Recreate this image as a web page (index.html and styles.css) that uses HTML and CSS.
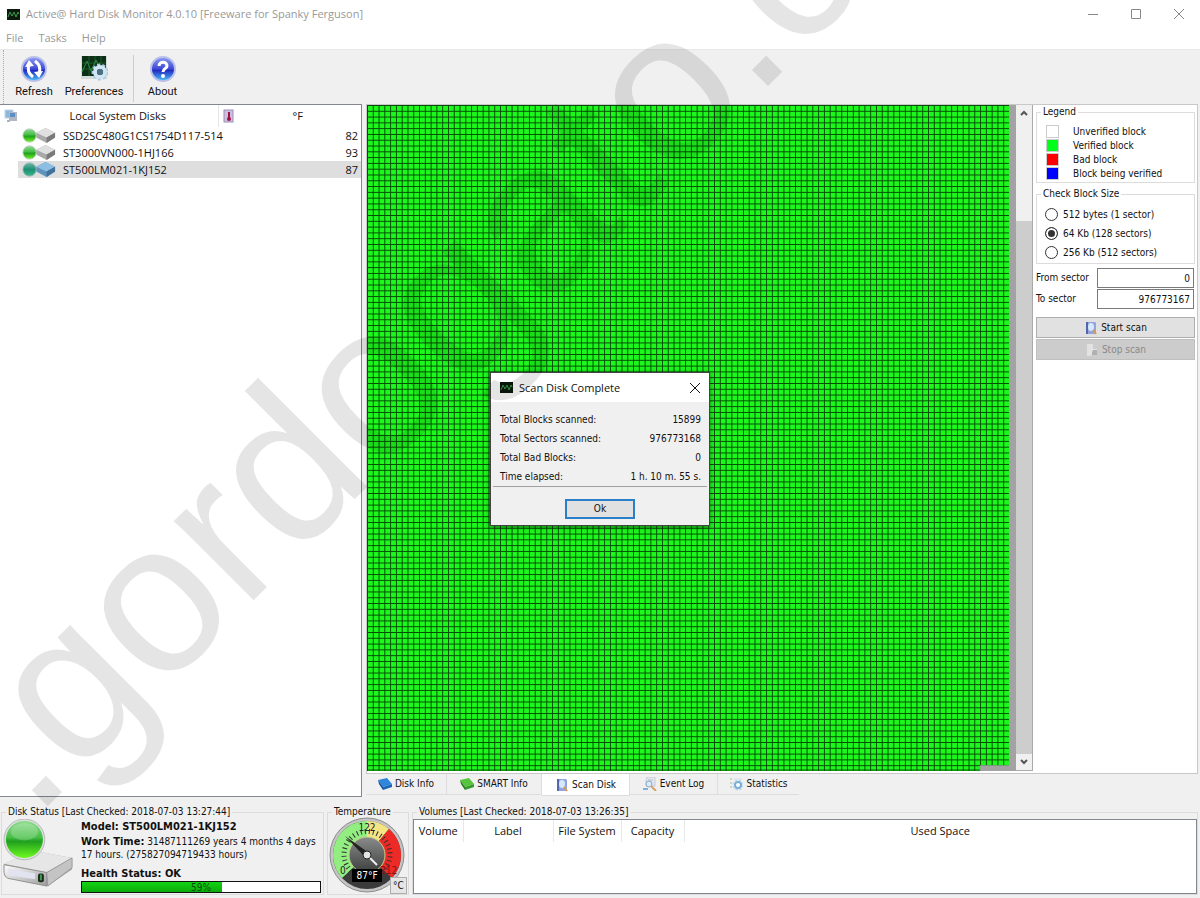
FILE: index.html
```html
<!DOCTYPE html>
<html lang="en">
<head>
    <meta charset="UTF-8">
    <meta name="viewport" content="width=device-width, initial-scale=1.0">
    <title>Active@ Hard Disk Monitor</title>
    <link rel="stylesheet" href="styles.css">
</head>
<body>
    <!-- shared icons -->
    <svg class="defs" width="0" height="0" aria-hidden="true">
        <defs>
            <linearGradient id="blueBall" x1="0" y1="0" x2="0" y2="1">
                <stop offset="0" stop-color="#8f9cf2"/>
                <stop offset="0.5" stop-color="#3f4ad4"/>
                <stop offset="0.55" stop-color="#2228c0"/>
                <stop offset="1" stop-color="#4ac4ff"/>
            </linearGradient>
            <linearGradient id="greenBall" x1="0" y1="0" x2="0" y2="1">
                <stop offset="0" stop-color="#8fdc8f"/>
                <stop offset="0.45" stop-color="#45be45"/>
                <stop offset="0.55" stop-color="#1f9f1f"/>
                <stop offset="1" stop-color="#6cfa1e"/>
            </linearGradient>
            <linearGradient id="tealBall" x1="0" y1="0" x2="0" y2="1">
                <stop offset="0" stop-color="#6fb8a8"/>
                <stop offset="0.5" stop-color="#1f8f74"/>
                <stop offset="1" stop-color="#35b88a"/>
            </linearGradient>
            <linearGradient id="steel" x1="0" y1="0" x2="1" y2="1">
                <stop offset="0" stop-color="#ffffff"/>
                <stop offset="1" stop-color="#9c9c9c"/>
            </linearGradient>
            <linearGradient id="dial" x1="0" y1="0" x2="0" y2="1">
                <stop offset="0" stop-color="#8a8c8c"/>
                <stop offset="1" stop-color="#3c3e3e"/>
            </linearGradient>
            <symbol id="app" viewBox="0 0 13 11">
                <rect width="13" height="11" fill="#0b1a0d"/>
                <path d="M1 8 L3 3 L5 7 L7 3 L9 8 L11 3 L12 5" fill="none" stroke="#3f9a4c"/>
            </symbol>
            <symbol id="drive" viewBox="0 0 36 18">
                <path d="M15 6 L25 1 L35 6 L35 11 L26 17 L15 11 Z" fill="#a9a9a9"/>
                <path d="M15 6 L25 1 L35 6 L26 11 Z" fill="#e0e0e0"/>
                <path d="M26 11 L35 6 L35 11 L26 17 Z" fill="#7a7a7a"/>
                <circle cx="8" cy="9" r="7" fill="url(#greenBall)" stroke="#b9c9b9"/>
            </symbol>
            <symbol id="driveSel" viewBox="0 0 36 18">
                <path d="M15 6 L25 1 L35 6 L35 11 L26 17 L15 11 Z" fill="#5f93bd"/>
                <path d="M15 6 L25 1 L35 6 L26 11 Z" fill="#8cbfe2"/>
                <path d="M26 11 L35 6 L35 11 L26 17 Z" fill="#3f719b"/>
                <circle cx="8" cy="9" r="7" fill="url(#tealBall)" stroke="#8fb5b0"/>
            </symbol>
            <symbol id="scan" viewBox="0 0 14 14">
                <path d="M2 1 H11 L12 2 V13 H2 Z" fill="#93a4dc"/>
                <path d="M2 1 H4 V13 H2 Z" fill="#5566ae"/>
                <ellipse cx="7" cy="6" rx="3" ry="4" fill="#d6e8fc"/>
                <path d="M9 9 L12 13" stroke="#d99a55" stroke-width="2"/>
            </symbol>
        </defs>
    </svg>

    <div class="title-bar">
        <svg class="app-icon"><use href="#app"/></svg>
        <span class="title">Active@ Hard Disk Monitor 4.0.10 [Freeware for Spanky Ferguson]</span>
        <button class="win-btn" aria-label="Minimize"><svg width="12" height="12"><path d="M1 6.5 H11"/></svg></button>
        <button class="win-btn" aria-label="Maximize"><svg width="12" height="12"><path d="M1.5 1.5 H10.5 V10.5 H1.5 Z"/></svg></button>
        <button class="win-btn" aria-label="Close"><svg width="12" height="12"><path d="M1 1 L11 11 M11 1 L1 11"/></svg></button>
    </div>

    <nav class="menu">
        <a href="#">File</a>
        <a href="#">Tasks</a>
        <a href="#">Help</a>
    </nav>

    <div class="toolbar">
        <button class="tool">
            <svg width="28" height="28" viewBox="0 0 28 28">
                <circle cx="14" cy="14" r="12" fill="url(#blueBall)" stroke="#b8c0ea" stroke-width="2"/>
                <path d="M13 22 C9 19 7 15 9 10" fill="none" stroke="#fff" stroke-width="3"/>
                <path d="M15 6 C19 9 21 13 19 18" fill="none" stroke="#fff" stroke-width="3"/>
                <path d="M5 12 L9 5 L14 11 Z M23 16 L19 23 L14 17 Z" fill="#fff"/>
            </svg>
            Refresh
        </button>
        <button class="tool wide">
            <svg width="28" height="28" viewBox="0 0 28 28">
                <rect x="1" y="1" width="26" height="23" fill="#d5dcd8"/>
                <rect x="2" y="1" width="24" height="20" fill="#0c3016"/>
                <path d="M2 8 H26 M2 14 H26 M9 1 V21 M15 1 V21 M21 1 V21" stroke="#1d5a2b"/>
                <path d="M2 17 L7 6 L11 16 L16 5 L19 11" fill="none" stroke="#2f8a41"/>
                <circle cx="20" cy="17" r="7" fill="none" stroke="#a9cde6" stroke-width="3" stroke-dasharray="3 2"/>
                <circle cx="20" cy="17" r="5" fill="none" stroke="#d0e6f5" stroke-width="4"/>
                <circle cx="20" cy="17" r="3" fill="#4d7288"/>
            </svg>
            Preferences
        </button>
        <button class="tool about">
            <svg width="28" height="28" viewBox="0 0 28 28">
                <circle cx="14" cy="14" r="12" fill="url(#blueBall)" stroke="#b8c0ea" stroke-width="2"/>
                <path d="M10 11 C10 6 18 6 18 11 C18 14 14 13 14 17" fill="none" stroke="#fff" stroke-width="3"/>
                <circle cx="14" cy="21" r="2" fill="#fff"/>
            </svg>
            About
        </button>
    </div>

    <main class="main">
        <section class="disks">
            <table class="disk-table">
                <thead>
                    <tr>
                        <th class="name">
                            <svg width="14" height="14" viewBox="0 0 14 14">
                                <rect x="1" y="1" width="8" height="8" fill="#8fb7dc" stroke="#c6d6e4"/>
                                <rect x="5" y="3" width="8" height="9" fill="#b0b8c4"/>
                                <rect x="6" y="4" width="5" height="4" fill="#5b8ec4"/>
                                <path d="M3 11 H6 V13 H3 Z" fill="#a8b4c0"/>
                            </svg>
                            <span>Local System Disks</span>
                        </th>
                        <th class="temp">
                            <svg width="12" height="14" viewBox="0 0 12 14">
                                <rect x="1" y="1" width="9" height="12" fill="#cdbfe0" stroke="#9a8fb8"/>
                                <path d="M6 3 V9" stroke="#a3123f" stroke-width="2"/>
                                <circle cx="6" cy="10" r="2" fill="#a3123f"/>
                            </svg>
                            <span>°F</span>
                        </th>
                    </tr>
                </thead>
                <tbody>
                    <tr><td><div class="disk"><svg><use href="#drive"/></svg>SSD2SC480G1CS1754D117-514</div></td><td class="num">82</td></tr>
                    <tr><td><div class="disk"><svg><use href="#drive"/></svg>ST3000VN000-1HJ166</div></td><td class="num">93</td></tr>
                    <tr class="selected"><td><div class="disk"><svg><use href="#driveSel"/></svg>ST500LM021-1KJ152</div></td><td class="num">87</td></tr>
                </tbody>
            </table>
        </section>

        <section class="work">
            <div class="page">
                <div class="scan-area">
                    <!-- 111 x 115 blocks, last row is 5 short -->
                    <svg class="blocks" viewBox="0 0 666 690" preserveAspectRatio="none">
                        <defs>
                            <pattern id="block" width="6" height="6" patternUnits="userSpaceOnUse">
                                <rect width="6" height="6" fill="#074a07"/>
                                <rect x="1" y="1" width="5" height="5" fill="#1cf81c"/>
                            </pattern>
                        </defs>
                        <path d="M0 0 H666 V684 H636 V690 H0 Z" fill="url(#block)"/>
                        <path d="M0 689 H636" stroke="#074a07"/>
                    </svg>
                    <div class="scrollbar">
                        <button aria-label="Scroll up"><svg width="10" height="10"><path d="M2 7 L5 4 L8 7"/></svg></button>
                        <div class="thumb"></div>
                        <button aria-label="Scroll down"><svg width="10" height="10"><path d="M2 3 L5 6 L8 3"/></svg></button>
                    </div>
                </div>

                <aside class="options">
                    <fieldset class="group legend-box">
                        <legend>Legend</legend>
                        <ul>
                            <li><i class="unverified"></i>Unverified block</li>
                            <li><i class="verified"></i>Verified block</li>
                            <li><i class="bad"></i>Bad block</li>
                            <li><i class="current"></i>Block being verified</li>
                        </ul>
                    </fieldset>
                    <fieldset class="group size-box">
                        <legend>Check Block Size</legend>
                        <label><input type="radio" name="size">512 bytes (1 sector)</label>
                        <label><input type="radio" name="size" checked>64 Kb (128 sectors)</label>
                        <label><input type="radio" name="size">256 Kb (512 sectors)</label>
                    </fieldset>
                    <div class="field">
                        <label for="from">From sector</label>
                        <input type="text" id="from" value="0">
                    </div>
                    <div class="field">
                        <label for="to">To sector</label>
                        <input type="text" id="to" value="976773167">
                    </div>
                    <div class="actions">
                        <button class="btn"><svg class="small-icon"><use href="#scan"/></svg>Start scan</button>
                        <button class="btn stop" disabled><svg class="small-icon" viewBox="0 0 14 14"><path d="M2 1 H8 V6 H12 V12 H6 V13 H2 Z" fill="#e2e2e2"/><path d="M8 7 H12 V12 H7 V9 Z" fill="#b0b0b0"/></svg>Stop scan</button>
                    </div>
                </aside>
            </div>

            <div class="tabs">
                <button class="tab"><svg class="small-icon" viewBox="0 0 14 14"><path d="M0 3 L9 1 L14 7 L5 10 Z" fill="#2f86da"/><path d="M0 3 L5 10 V13 L1 7 Z" fill="#0f4f9c"/><path d="M5 10 L14 7 V10 L5 13 Z" fill="#1766b8"/></svg>Disk Info</button>
                <button class="tab"><svg class="small-icon" viewBox="0 0 14 14"><path d="M0 3 L9 1 L14 7 L5 10 Z" fill="#57c43f"/><path d="M0 3 L5 10 V13 L1 7 Z" fill="#1f7a1c"/><path d="M5 10 L14 7 V10 L5 13 Z" fill="#349a2a"/></svg>SMART Info</button>
                <button class="tab active"><svg class="small-icon"><use href="#scan"/></svg>Scan Disk</button>
                <button class="tab"><svg class="small-icon" viewBox="0 0 14 14"><path d="M4 0 H12 V9 H3 V4 Z" fill="#e4e7ee" stroke="#c5cbd8"/><path d="M5 3 H10" stroke="#b5bdd0"/><circle cx="6" cy="7" r="3" fill="#d8ebf9" stroke="#8aa9c6"/><path d="M8 9 L13 14" stroke="#d9a26a" stroke-width="2"/><path d="M0 12 H5" stroke="#7fb0dc" stroke-width="2"/></svg>Event Log</button>
                <button class="tab"><svg class="small-icon" viewBox="0 0 14 14"><path d="M1 2 H3 M1 6 H3 M1 10 H3" stroke="#8fc79c"/><path d="M5 2 H13 M5 12 H13" stroke="#d5dde5"/><circle cx="9" cy="8" r="3" fill="#fff" stroke="#78afd8" stroke-width="2"/><circle cx="9" cy="8" r="5" fill="none" stroke="#a3cbe8" stroke-dasharray="2 2"/></svg>Statistics</button>
            </div>
        </section>
    </main>

    <footer class="status">
        <fieldset class="group disk-status">
            <legend>Disk Status [Last Checked: 2018-07-03 13:27:44]</legend>
            <svg class="big-drive" width="74" height="72" viewBox="0 0 76 72">
                <path d="M2 46 L34 33 L72 40 V52 L47 69 L4 60 Z" fill="#b0b0b0"/>
                <path d="M2 46 L34 33 L72 40 L46 55 Z" fill="#e6e6e6"/>
                <path d="M2 47 L46 55 V69 L6 61 Q2 59 2 55 Z" fill="url(#steel)" stroke="#8f8f8f"/>
                <path d="M6 51 L34 56 V62 L8 58 Z" fill="#e2e3f0"/>
                <path d="M46 55 L72 40 V50 L47 69 Z" fill="#c4c4c4" stroke="#999"/>
                <rect x="37" y="56" width="6" height="9" rx="2" fill="#1d2d1d"/>
                <rect x="39" y="57" width="2" height="6" fill="#3c9a4a"/>
                <circle cx="23" cy="21" r="21" fill="#d9dfd9" stroke="#b3b9b3"/>
                <circle cx="23" cy="21" r="19" fill="url(#greenBall)"/>
                <ellipse cx="23" cy="13" rx="14" ry="9" fill="#fff" opacity="0.2"/>
            </svg>
            <div class="info">
                <p><b>Model: ST500LM021-1KJ152</b></p>
                <p class="worktime"><b>Work Time:</b> 31487111269 years 4 months 4 days 17 hours. (275827094719433 hours)</p>
                <p><b>Health Status: OK</b></p>
                <div class="meter"><div class="meter-fill" style="width: 59%"></div><span>59%</span></div>
            </div>
        </fieldset>

        <fieldset class="group temperature">
            <legend>Temperature</legend>
            <svg class="gauge" width="76" height="76" viewBox="0 0 76 76">
                <circle cx="38" cy="38" r="37" fill="#c4c4c4" stroke="#8c8c8c"/>
                <circle cx="38" cy="38" r="34" fill="#3b3b3b"/>
                <path d="M38 38 L13 61 A34 34 0 0 1 38 4 Z" fill="#92ee80"/>
                <path d="M38 38 L38 4 A34 34 0 0 1 60 12 Z" fill="#f4e584"/>
                <path d="M38 38 L60 12 A34 34 0 0 1 63 61 Z" fill="#ee2a26"/>
                <path d="M22 54 A23 23 0 1 1 54 54" fill="none" stroke="#333" stroke-width="5" stroke-dasharray="1 3"/>
                <circle cx="38" cy="38" r="18" fill="url(#dial)" stroke="#c9cf8a"/>
                <path d="M16 19 L40 36 L36 40 Z" fill="#222"/>
                <path d="M38 38 L48 48" stroke="#eee" stroke-width="2"/>
                <circle cx="38" cy="38" r="4" fill="#e4e4e4" stroke="#222"/>
                <text x="38" y="14" text-anchor="middle">122</text>
                <text x="11" y="57">0</text>
                <text x="51" y="57" class="hot">212</text>
                <rect x="23" y="52" width="30" height="13" fill="#000"/>
                <text x="38" y="62" text-anchor="middle" class="now">87°F</text>
            </svg>
            <button class="unit">°C</button>
        </fieldset>

        <fieldset class="group volumes">
            <legend>Volumes [Last Checked: 2018-07-03 13:26:35]</legend>
            <div class="volume-list">
                <table>
                    <thead>
                        <tr><th>Volume</th><th>Label</th><th>File System</th><th>Capacity</th><th>Used Space</th></tr>
                    </thead>
                </table>
            </div>
        </fieldset>
    </footer>

    <div class="dialog" role="dialog" aria-labelledby="dlg-title">
        <div class="dialog-title">
            <svg class="app-icon"><use href="#app"/></svg>
            <span id="dlg-title">Scan Disk Complete</span>
            <button aria-label="Close"><svg width="12" height="12"><path d="M1 1 L11 11 M11 1 L1 11"/></svg></button>
        </div>
        <dl>
            <dt>Total Blocks scanned:</dt><dd>15899</dd>
            <dt>Total Sectors scanned:</dt><dd>976773168</dd>
            <dt>Total Bad Blocks:</dt><dd>0</dd>
            <dt>Time elapsed:</dt><dd>1 h. 10 m. 55 s.</dd>
        </dl>
        <div class="dialog-foot"><button class="ok">Ok</button></div>
    </div>

    <svg class="watermark"><text transform="translate(34 820) rotate(-45)">.gordogato.c</text></svg>
</body>
</html>
```

FILE: styles.css
```css
* {
    box-sizing: border-box;
}
body {
    margin: 0;
    min-height: 100vh;
    display: flex;
    flex-direction: column;
    position: relative;
    overflow: hidden;
    background: #f0f0f0;
    color: #111;
    font-family: "DejaVu Sans Condensed", Tahoma, sans-serif;
    font-size: 10px;
    line-height: 14px;
}
button, input {
    font: inherit;
    color: inherit;
    margin: 0;
}
button {
    border: 0;
    padding: 0;
    background: none;
}
.defs {
    position: absolute;
}
.app-icon {
    width: 13px;
    height: 11px;
}
.small-icon {
    width: 14px;
    height: 14px;
}

/* title and menu */
.title-bar {
    display: flex;
    align-items: center;
    height: 28px;
    padding-left: 7px;
    background: #fff;
}
.title, .menu, .disk-table, .volumes th, .dialog-title {
    font-family: "Open Sans", "Segoe UI", sans-serif;
    font-size: 11px;
}
.title {
    flex: 1;
    margin-left: 6px;
    color: #999;
}
.win-btn {
    width: 43px;
    height: 28px;
}
.win-btn svg, .dialog-title button svg {
    fill: none;
    stroke: #888;
    display: block;
    margin: auto;
}
.menu {
    display: flex;
    gap: 15px;
    height: 22px;
    padding: 3px 6px;
    background: #fff;
    border-bottom: 1px solid #e8e8e8;
}
.menu a {
    color: #999;
    text-decoration: none;
}

/* toolbar */
.toolbar {
    display: flex;
    height: 54px;
    padding: 5px 0 2px 9px;
    margin-left: 3px;
    border-left: 1px dotted #aaa;
}
.tool {
    display: flex;
    flex-direction: column;
    align-items: center;
    width: 42px;
    font-family: Roboto, "Segoe UI", sans-serif;
    font-size: 11px;
}
.tool svg {
    width: 28px;
    height: 28px;
    margin-bottom: 2px;
}
.tool.wide {
    width: 78px;
}
.tool.about {
    width: 58px;
    border-left: 1px solid #ccc;
}

/* main area */
.main {
    flex: 1;
    display: flex;
    gap: 4px;
    padding-right: 2px;
}
.disks {
    width: 362px;
    background: #fff;
    border: 1px solid #828790;
    border-left: 0;
}
.disk-table {
    width: 100%;
    border-collapse: collapse;
    table-layout: fixed;
}
.disk-table th {
    height: 22px;
    padding: 0;
    font-weight: normal;
}
.disk-table th svg {
    float: left;
    margin-left: 4px;
}
.disk-table .name {
    width: 218px;
    border-right: 1px solid #e5e5e5;
}
.disk-table td {
    height: 17px;
    padding: 0;
}
.disk {
    display: flex;
    align-items: center;
    gap: 6px;
    height: 17px;
    margin-left: 18px;
    padding-left: 3px;
    white-space: nowrap;
}
.disk svg {
    flex: none;
    width: 36px;
    height: 17px;
}
.selected .disk, .selected .num {
    background: #dedede;
}
.disk-table .num {
    padding-right: 3px;
    text-align: right;
}

.work {
    flex: 1;
    display: flex;
    flex-direction: column;
}
.page {
    flex: 1;
    display: flex;
    background: #fff;
    border: 1px solid #c8c8c8;
}
.scan-area {
    flex: 1;
    display: flex;
    margin-bottom: 2px;
    background: #a3a3a3;
}
.blocks {
    flex: 1;
    min-width: 0;
    width: 0;
    height: 100%;
    margin-right: 7px;
}
.scrollbar {
    width: 17px;
    display: flex;
    flex-direction: column;
    background: #f0f0f0;
    border: 1px solid #aaa;
    border-left: 0;
    border-top: 0;
}
.scrollbar button {
    height: 16px;
}
.scrollbar svg {
    fill: none;
    stroke: #555;
    stroke-width: 2;
    display: block;
    margin: auto;
}
.scrollbar .thumb {
    flex: 1;
    margin-top: 100px;
    background: #cdcdcd;
}
.options {
    width: 164px;
    padding: 0 2px 0 3px;
}
.group {
    margin: 0;
    padding: 0;
    min-width: 0;
    border: 1px solid #dcdcdc;
}
.group legend {
    margin-left: 4px;
    padding: 0 2px;
}
.legend-box ul {
    list-style: none;
    margin: 6px 0 1px 9px;
    padding: 0;
}
.legend-box li {
    display: flex;
    height: 14px;
}
.legend-box i {
    width: 13px;
    height: 13px;
    margin-right: 14px;
    border: 1px solid #ccc;
}
.legend-box .verified { background: #00ff1a; }
.legend-box .bad { background: #f00; }
.legend-box .current { background: #00f; }
.size-box {
    margin-top: 4px;
    padding-bottom: 1px;
}
.size-box label {
    display: flex;
    align-items: center;
    gap: 5px;
    height: 19px;
    margin-left: 8px;
}
.size-box legend + label {
    margin-top: 4px;
}
.size-box input {
    appearance: none;
    width: 13px;
    height: 13px;
    border: 1px solid #333;
    border-radius: 50%;
    background: #fff;
}
.size-box input:checked {
    background: #333;
    box-shadow: inset 0 0 0 2px #fff;
}
.field {
    display: flex;
    align-items: center;
    justify-content: space-between;
    margin: 1px 1px 0 0;
}
.size-box + .field {
    margin-top: 4px;
}
.field input {
    width: 97px;
    height: 20px;
    padding: 0 3px;
    border: 1px solid #7a7a7a;
    text-align: right;
    background: #fff;
}
.actions {
    display: flex;
    flex-direction: column;
    gap: 1px;
    margin-top: 8px;
}
.btn {
    display: flex;
    align-items: center;
    justify-content: center;
    gap: 3px;
    height: 21px;
    border: 1px solid #adadad;
    background: #e1e1e1;
}
.btn.stop {
    border-color: #bfbfbf;
    background: #ccc;
    color: #8a8a8a;
}

/* tabs under the page */
.tabs {
    display: flex;
    height: 23px;
}
.tab {
    display: flex;
    align-items: center;
    justify-content: center;
    gap: 3px;
    width: 88px;
    height: 21px;
    border-right: 1px solid #ddd;
    border-bottom: 1px solid #ddd;
}
.tab:first-child {
    width: 81px;
}
.tab:nth-child(2) {
    width: 95px;
}
.tab:last-child {
    width: 81px;
    border-right: 0;
}
.tab.active {
    height: 22px;
    background: #fff;
}

/* status area */
.status {
    display: grid;
    grid-template-columns: 323px 82px 1fr;
    gap: 3px;
    height: 101px;
    padding: 8px 2px 3px 1px;
}
.disk-status, .temperature {
    position: relative;
}
.disk-status {
    display: flex;
}
.big-drive {
    width: 74px;
    height: 70px;
}
.info {
    width: 240px;
    margin-left: 5px;
}
.info p {
    margin: 1px 0 0;
    line-height: 13px;
}
.info b {
    font-size: 11px;
}
.info .worktime {
    margin: 2px 0 6px;
}
.meter {
    position: relative;
    height: 12px;
    margin-top: 1px;
    border: 1px solid #111;
    background: #fff;
}
.meter-fill {
    height: 100%;
    background: linear-gradient(#12d412, #0bab0b);
}
.meter span {
    position: absolute;
    inset: 0;
    line-height: 11px;
    text-align: center;
    color: #0a4a0a;
}
.gauge {
    display: block;
    margin: -2px 0 0 1px;
}
.gauge text {
    font-family: "Liberation Sans Narrow", "DejaVu Sans Condensed", sans-serif;
    font-size: 10px;
    fill: #222;
}
.gauge .hot {
    fill: #8a0f0f;
}
.gauge .now {
    font-family: "DejaVu Sans Condensed", sans-serif;
    fill: #fff;
}
.unit {
    position: absolute;
    right: 1px;
    bottom: 0;
    width: 17px;
    height: 17px;
    border: 1px solid #adadad;
    background: #e6e6e6;
}
.volume-list {
    height: 75px;
    background: #fff;
    border: 1px solid #828790;
}
.volume-list table {
    width: 100%;
    border-collapse: collapse;
    table-layout: fixed;
}
.volumes th {
    height: 22px;
    padding: 0;
    font-weight: normal;
    border-right: 1px solid #e8e8e8;
}
.volumes th:nth-child(1) { width: 49px; }
.volumes th:nth-child(2) { width: 90px; }
.volumes th:nth-child(3) { width: 68px; }
.volumes th:nth-child(4) { width: 63px; }
.volumes th:last-child { border: 0; }

/* result dialog */
.dialog {
    position: absolute;
    left: 50%;
    top: 50%;
    width: 220px;
    transform: translate(-50%, -50%);
    background: #f0f0f0;
    border: 1px solid #444;
    box-shadow: 0 1px 5px rgba(0, 0, 0, 0.5);
}
.dialog-title {
    display: flex;
    align-items: center;
    gap: 6px;
    height: 29px;
    padding: 0 8px 0 9px;
    background: #fff;
}
.dialog-title span {
    flex: 1;
}
.dialog-title button svg {
    stroke: #111;
}
.dialog dl {
    display: grid;
    grid-template-columns: auto auto;
    margin: 8px 2px 0;
    padding: 0 6px 0 7px;
    line-height: 19px;
    border-bottom: 1px solid #a0a0a0;
}
.dialog dd {
    margin: 0;
    text-align: right;
}
.dialog-foot {
    padding: 12px 0 6px;
    text-align: center;
}
.ok {
    width: 70px;
    height: 20px;
    border: 2px solid #2a7fc9;
    background: #e1e1e1;
}

/* diagonal site mark over everything */
.watermark {
    position: absolute;
    left: 0;
    top: 0;
    width: 100%;
    height: 100%;
    pointer-events: none;
    fill: #000;
    fill-opacity: 0.1;
}
.watermark text {
    font-family: "Liberation Sans", Arial, sans-serif;
    font-size: 213px;
}
```
